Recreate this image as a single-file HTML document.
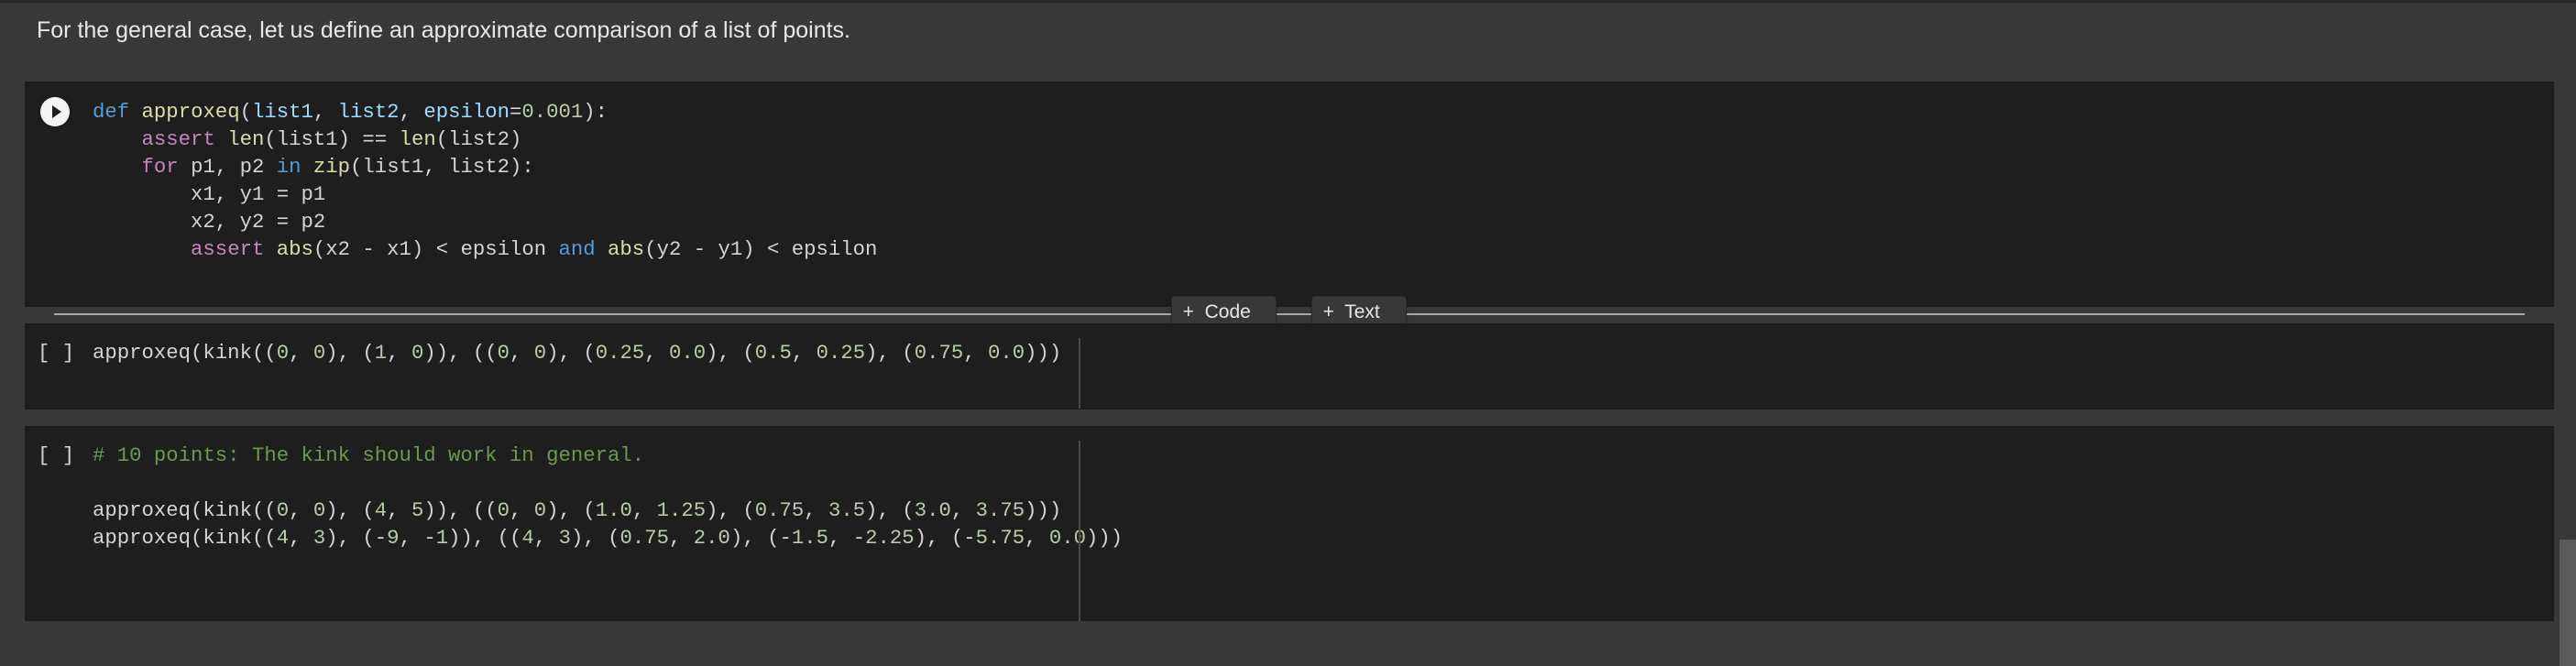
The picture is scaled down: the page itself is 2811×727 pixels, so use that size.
<!DOCTYPE html>
<html><head><meta charset="utf-8"><style>
html,body{margin:0;padding:0;width:2811px;height:727px;overflow:hidden;background:#383838;position:relative}
.top{position:absolute;left:0;top:0;width:2811px;height:3px;background:#262626}
.md{position:absolute;left:40px;top:19px;font:25px "Liberation Sans",sans-serif;color:#e8e8e8;white-space:nowrap}
.cell{position:absolute;left:27px;width:2760px;background:#1e1e1e}
.code{position:absolute;left:101px;font:22.3px/30px "Liberation Mono",monospace;color:#d4d4d4;white-space:pre}
.br{position:absolute;left:41px;font:22.3px/30px "Liberation Mono",monospace;color:#d4d4d4;white-space:pre}
.vl{position:absolute;left:1177px;width:2px;background:#4a4a4a}
.k{color:#569cd6}.c{color:#c586c0}.f{color:#dcdcaa}.p{color:#9cdcfe}.n{color:#b5cea8}.cm{color:#6a9955}
.run{position:absolute;left:44px;top:106px;width:32px;height:32px;border-radius:50%;background:#f4f4f4}
.run:after{content:"";position:absolute;left:13px;top:9px;border-left:10px solid #1e1e1e;border-top:7px solid transparent;border-bottom:7px solid transparent}
.div{position:absolute;left:59px;top:342px;width:2696px;height:2px;background:#a8a8a8}
.btn{position:absolute;top:323px;height:35px;background:#383838;border:1px solid #2a2a2a;border-radius:4px;box-sizing:border-box;font:21px/33px "Liberation Sans",sans-serif;color:#e6e6e6;white-space:pre;box-shadow:0 1px 2px rgba(0,0,0,.4)}
.sb{position:absolute;left:2793px;top:589px;width:18px;height:138px;background:#5a5a5a}
</style></head><body>
<div class="top"></div>
<div class="md">For the general case, let us define an approximate comparison of a list of points.</div>

<div class="cell" style="top:89px;height:246px">
</div>
<div class="run"></div>
<div class="code" style="top:107px"><span class="k">def</span> <span class="f">approxeq</span>(<span class="p">list1</span>, <span class="p">list2</span>, <span class="p">epsilon</span>=<span class="n">0.001</span>):
    <span class="c">assert</span> <span class="f">len</span>(list1) == <span class="f">len</span>(list2)
    <span class="c">for</span> p1, p2 <span class="k">in</span> <span class="f">zip</span>(list1, list2):
        x1, y1 = p1
        x2, y2 = p2
        <span class="c">assert</span> <span class="f">abs</span>(x2 - x1) &lt; epsilon <span class="k">and</span> <span class="f">abs</span>(y2 - y1) &lt; epsilon</div>

<div class="div"></div>
<div class="btn" style="left:1278px;width:115px">  +  Code</div>
<div class="btn" style="left:1431px;width:104px">  +  Text</div>

<div class="cell" style="top:353px;height:94px"></div>
<div class="br" style="top:370px">[ ]</div>
<div class="code" style="top:370px">approxeq(kink((<span class="n">0</span>, <span class="n">0</span>), (<span class="n">1</span>, <span class="n">0</span>)), ((<span class="n">0</span>, <span class="n">0</span>), (<span class="n">0.25</span>, <span class="n">0.0</span>), (<span class="n">0.5</span>, <span class="n">0.25</span>), (<span class="n">0.75</span>, <span class="n">0.0</span>)))</div>
<div class="vl" style="top:369px;height:77px"></div>

<div class="cell" style="top:465px;height:213px"></div>
<div class="br" style="top:482px">[ ]</div>
<div class="code" style="top:482px"><span class="cm"># 10 points: The kink should work in general.</span>

approxeq(kink((<span class="n">0</span>, <span class="n">0</span>), (<span class="n">4</span>, <span class="n">5</span>)), ((<span class="n">0</span>, <span class="n">0</span>), (<span class="n">1.0</span>, <span class="n">1.25</span>), (<span class="n">0.75</span>, <span class="n">3.5</span>), (<span class="n">3.0</span>, <span class="n">3.75</span>)))
approxeq(kink((<span class="n">4</span>, <span class="n">3</span>), (-<span class="n">9</span>, -<span class="n">1</span>)), ((<span class="n">4</span>, <span class="n">3</span>), (<span class="n">0.75</span>, <span class="n">2.0</span>), (-<span class="n">1.5</span>, -<span class="n">2.25</span>), (-<span class="n">5.75</span>, <span class="n">0.0</span>)))</div>
<div class="vl" style="top:481px;height:197px"></div>

<div class="sb"></div>
</body></html>
